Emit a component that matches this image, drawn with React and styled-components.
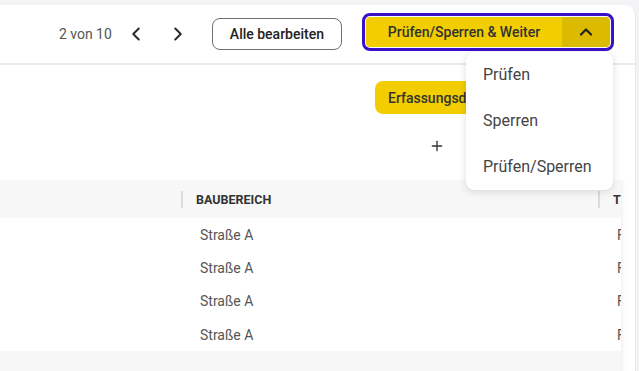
import React from 'react';
import styled, { createGlobalStyle } from 'styled-components';
import { ChevronLeft, ChevronRight, ChevronUp, Plus } from 'lucide-react';

const GlobalStyle = createGlobalStyle`
body {
    margin: 0;
    background: #f3f3f5;
    font-family: Roboto, "Liberation Sans", sans-serif;
    overflow: hidden;
}
`;

const Page = styled.div`
width: 639px;
height: 371px;
padding: 5px 3px 0 0;
box-sizing: border-box;
`;

const Card = styled.section`
height: 366px;
background: #fff;
border-radius: 0 10px 0 0;
border-right: 1px solid #e8e8ec;
display: flex;
flex-direction: column;
overflow: hidden;
`;

const Header = styled.header`
height: 58px;
flex-shrink: 0;
border-bottom: 2px solid #ebebef;
display: flex;
justify-content: flex-end;
align-items: center;
padding-right: 25px;
`;

const Counter = styled.span`
font-size: 14px;
color: #555;
margin-right: 12px;
`;

const IconButton = styled.button`
width: 24px;
height: 24px;
border: none;
background: none;
padding: 0;
display: flex;
align-items: center;
justify-content: center;
color: #2b2b2b;
margin-right: ${p => p.gap || 0}px;
`;

const OutlineButton = styled.button`
height: 32px;
padding: 0 17px;
border: 1px solid #6f6f6f;
border-radius: 8px;
background: #fff;
font-family: inherit;
font-size: 14px;
font-weight: 500;
color: #222;
margin: 0 24px 0 0;
`;

const Split = styled.div`
position: relative;
display: flex;
height: 30px;
margin-bottom: 5px;
border-radius: 4px;
outline: 3px solid #3a10c8;
outline-offset: 1px;
`;

const SplitMain = styled.button`
width: 196px;
border: none;
background: #f2cd00;
border-radius: 4px 0 0 4px;
font-family: inherit;
font-size: 14px;
font-weight: 500;
color: #333;
padding: 0;
`;

const SplitToggle = styled.button`
width: 48px;
border: none;
background: #dcba00;
border-radius: 0 4px 4px 0;
display: flex;
align-items: center;
justify-content: center;
color: #222;
padding: 0;
`;

const Menu = styled.ul`
position: absolute;
top: 35px;
right: -3px;
width: 147px;
margin: 0;
padding: 0;
list-style: none;
background: #fff;
border-radius: 8px;
box-shadow: 0 2px 8px rgba(0, 0, 0, 0.12), 0 0 1px rgba(0, 0, 0, 0.1);
z-index: 5;
`;

const MenuItem = styled.li`
height: 46px;
display: flex;
align-items: center;
padding-left: 17px;
font-size: 16px;
color: #444;
`;

const Tools = styled.div`
height: 115px;
flex-shrink: 0;
display: flex;
flex-direction: column;
padding-left: 375px;
padding-top: 16px;
box-sizing: border-box;
`;

const Chip = styled.span`
align-self: flex-start;
height: 33px;
display: flex;
align-items: center;
padding: 0 13px;
background: #f2cd00;
border-radius: 8px;
font-size: 14px;
font-weight: 500;
color: #333;
`;

const AddButton = styled.button`
margin: 24px 0 0 54px;
align-self: flex-start;
border: none;
background: none;
padding: 0;
color: #333;
display: flex;
`;

const TableArea = styled.div`
flex: 1;
display: flex;
min-height: 0;
`;

const Table = styled.div`
width: 621px;
flex-shrink: 0;
display: flex;
flex-direction: column;
overflow: hidden;
background: #f7f7f8;
`;

const ScrollEdge = styled.div`
flex: 1;
background: #fff;
box-shadow: inset 4px 0 4px -3px rgba(0, 0, 0, 0.08);
`;

const Row = styled.div`
display: grid;
grid-template-columns: 181px 417px 23px;
height: ${p => p.h}px;
background: ${p => (p.head ? '#f7f7f8' : '#fff')};
align-items: center;
`;

const HeadCell = styled.div`
display: flex;
align-items: center;
height: 100%;
font-size: 12.5px;
font-weight: 700;
color: #333;
white-space: nowrap;
overflow: hidden;
`;

const Divider = styled.span`
flex-shrink: 0;
width: 2px;
height: 17px;
background: #dcdce0;
margin-right: 13px;
`;

const Cell = styled.div`
padding-left: 19px;
font-size: 14px;
color: #555;
white-space: nowrap;
overflow: hidden;
`;

const rows = [0, 1, 2, 3];

export default function App() {
    return (
        <Page>
            <GlobalStyle />
            <Card>
                <Header>
                    <Counter>2 von 10</Counter>
                    <IconButton gap={18}><ChevronLeft size={22} strokeWidth={2.2} /></IconButton>
                    <IconButton gap={22}><ChevronRight size={22} strokeWidth={2.2} /></IconButton>
                    <OutlineButton>Alle bearbeiten</OutlineButton>
                    <Split>
                        <SplitMain>Prüfen/Sperren &amp; Weiter</SplitMain>
                        <SplitToggle><ChevronUp size={20} strokeWidth={2.6} /></SplitToggle>
                        <Menu>
                            <MenuItem>Prüfen</MenuItem>
                            <MenuItem>Sperren</MenuItem>
                            <MenuItem>Prüfen/Sperren</MenuItem>
                        </Menu>
                    </Split>
                </Header>
                <Tools>
                    <Chip>Erfassungsdaten</Chip>
                    <AddButton><Plus size={16} strokeWidth={2} /></AddButton>
                </Tools>
                <TableArea>
                    <Table>
                        <Row head h={38}>
                            <HeadCell />
                            <HeadCell><Divider />BAUBEREICH</HeadCell>
                            <HeadCell><Divider />TYP</HeadCell>
                        </Row>
                        {rows.map(i => (
                            <Row key={i} h={i === 2 ? 34 : 33}>
                                <Cell />
                                <Cell>Straße A</Cell>
                                <Cell>Fahrbahn</Cell>
                            </Row>
                        ))}
                    </Table>
                    <ScrollEdge />
                </TableArea>
            </Card>
        </Page>
    );
}
